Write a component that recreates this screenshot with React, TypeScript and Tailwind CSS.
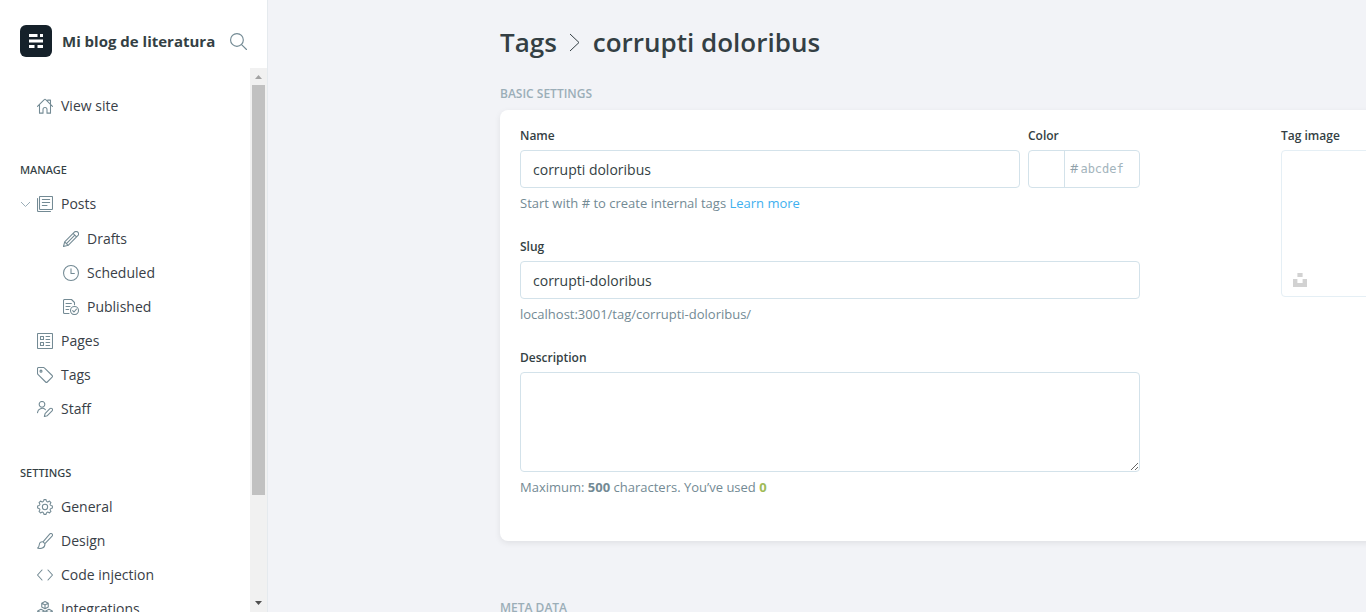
import type { ReactNode } from 'react'

function Icon({ children, className = 'size-4' }: { children: ReactNode; className?: string }) {
  return (
    <svg
      viewBox="0 0 24 24"
      fill="none"
      stroke="currentColor"
      strokeWidth="1.6"
      strokeLinecap="round"
      strokeLinejoin="round"
      aria-hidden="true"
      className={`shrink-0 ${className}`}
    >
      {children}
    </svg>
  )
}

// Outline of a cog: eight flat teeth joined by curved valleys.
function gearPath() {
  const point = (radius: number, degrees: number) => {
    const angle = ((degrees - 90) * Math.PI) / 180
    return `${(12 + radius * Math.cos(angle)).toFixed(2)} ${(12 + radius * Math.sin(angle)).toFixed(2)}`
  }
  let d = `M${point(11.2, -8)}`
  for (let tooth = 0; tooth < 8; tooth++) {
    const a = tooth * 45
    d += `L${point(11.2, a + 8)}L${point(9.4, a + 13)}Q${point(7.6, a + 22.5)} ${point(9.4, a + 32)}L${point(11.2, a + 37)}`
  }
  return `${d}Z`
}

const icons = {
  house: (
    <Icon>
      <path d="M.75 12.6 10.9 2.3a1.500 1.500 0 0 1 2.200 0l10.150 10.300M3.750 10v12.700h5.250v-5.500a3 3 0 0 1 6 0v5.500h5.250V10M16 3.200h4.250v5" />
    </Icon>
  ),
  posts: (
    <Icon>
      <rect x="3.750" y=".75" width="19.500" height="19.500" rx="1" />
      <path d="M20.300 23.250H2.250A1.500 1.500 0 0 1 .75 21.750V3.700M8 5.250h11M8 9.750h11M8 14.250h7" />
    </Icon>
  ),
  pencil: (
    <Icon>
      <path d="M22.200 1.800a3.700 3.700 0 0 0-5.200 0L2.500 16.300.75 23.250l7-1.750L22.200 7a3.700 3.700 0 0 0 0-5.200zM15.100 3.700l5.200 5.200M17.700 6.300 5.200 18.800M2.500 16.300l5.200 5.200" />
    </Icon>
  ),
  clock: (
    <Icon>
      <circle cx="12" cy="12" r="11.200" />
      <path d="M12 5.500V12.750h5" />
    </Icon>
  ),
  published: (
    <Icon>
      <path d="M9 21.750H2.250A1.500 1.500 0 0 1 .75 20.250V2.250A1.500 1.500 0 0 1 2.250.75h10.500L17.250 5.250V8.500M4.500 6.750h8M4.500 11.250h6M4.500 15.750h4" />
      <circle cx="17.250" cy="17.250" r="6" />
      <path d="m14.500 17.500 2 2 3.700-4.300" />
    </Icon>
  ),
  pages: (
    <Icon>
      <rect x=".75" y=".75" width="22.500" height="22.500" rx="1" />
      <path d="M5.250 5.250h4.500v4.500h-4.500zM5.250 14.250h4.500v4.500h-4.500zM13.500 5.250h5.500M13.500 9.750h5.500M13.500 14.250h5.500M13.500 18.750h5.500" />
    </Icon>
  ),
  tag: (
    <Icon>
      <path d="M.75 2.250v7.250a2 2 0 0 0 .6 1.400l11.600 11.600a1.800 1.800 0 0 0 2.500 0l7.250-7.250a1.800 1.800 0 0 0 0-2.500L11 1.350A2 2 0 0 0 9.600.75H2.250A1.500 1.500 0 0 0 .75 2.250z" />
      <circle cx="6" cy="6.200" r="1.500" />
    </Icon>
  ),
  staff: (
    <Icon>
      <circle cx="7.500" cy="5" r="4.250" />
      <path d="M.75 17.500a7 7 0 0 1 11.800-4.600M22.600 11.500a2.300 2.300 0 0 0-3.300 0l-7.200 7.300-1.100 4.500 4.500-1.200 7.100-7.200a2.400 2.400 0 0 0 0-3.400z" />
    </Icon>
  ),
  gear: (
    <Icon>
      <circle cx="12" cy="12" r="4" />
      <path d={gearPath()} />
    </Icon>
  ),
  brush: (
    <Icon>
      <path d="M22.600 1.400a2.300 2.300 0 0 0-3.300 0L9 13.200l2.900 2.900L22.600 4.700a2.300 2.300 0 0 0 0-3.300zM9 13.200c-3.500-.5-5.300 1.400-5.500 4-.2 2.400-1 4.200-2.750 5.400 4.200 1.600 11.300.6 11.150-6.500" />
    </Icon>
  ),
  code: (
    <Icon>
      <path d="M7.500 4.500.75 12l6.750 7.500M16.500 4.500l6.750 7.500-6.750 7.500" />
    </Icon>
  ),
  modules: (
    <Icon>
      <path d="m12 .75 4.900 2.500v5.700L12 11.500 7.100 8.950v-5.700zM7.500 3.500l4.500 2.400 4.500-2.400M12 5.900v5.600M6 12.500l5 2.500v5.700l-5 2.500-5-2.500V15zM1.300 15.200 6 17.500l4.700-2.300M6 17.500v5.500M18 12.500l5 2.500v5.700l-5 2.500-5-2.500V15zM13.300 15.200l4.700 2.300 4.700-2.300M18 17.500v5.500" />
    </Icon>
  ),
}

function NavLink({ icon, children }: { icon: ReactNode; children: ReactNode }) {
  return (
    <a href="#" className="flex h-[34px] items-center gap-2 text-[#738a94]">
      {icon}
      <span className="text-sm text-[#394047]">{children}</span>
    </a>
  )
}

function NavHeading({ children }: { children: ReactNode }) {
  return (
    <h2 className="mt-[30px] flex h-[34px] items-center font-['Noto_Sans',sans-serif] text-[11px] font-medium text-[#343f44]">
      {children}
    </h2>
  )
}

function Sidebar() {
  return (
    <aside className="flex w-[268px] shrink-0 flex-col border-r border-[#e5eaee] bg-white">
      <header className="flex h-[68px] shrink-0 items-center px-5 pt-[14px]">
        <svg viewBox="0 0 32 32" className="size-8 shrink-0" aria-hidden="true">
          <rect width="32" height="32" rx="6" fill="#15212a" />
          <path fill="#fff" d="M9 9h8.500v3H9zM20 9h3v3h-3zM9 14.500h14v3H9zM9 20h5.500v3H9zM17.500 20H23v3h-5.500z" />
        </svg>
        <span className="ml-[10px] flex-1 text-[15px] font-bold whitespace-nowrap text-[#343f44]">
          Mi blog de literatura
        </span>
        <button type="button" aria-label="Search" className="text-[#738a94]">
          <Icon className="size-[17px]">
            <circle cx="9.800" cy="9.800" r="9" />
            <path d="m16.300 16.300 7 7" />
          </Icon>
        </button>
      </header>
      <div className="flex min-h-0 flex-1">
        <nav className="flex-1 overflow-hidden pt-[21px] pl-5">
          <div className="pl-[17px]">
            <NavLink icon={icons.house}>View site</NavLink>
          </div>
          <NavHeading>MANAGE</NavHeading>
          <div className="flex items-center">
            <button type="button" aria-label="Collapse posts" className="w-[17px] text-[#9baeb8]">
              <svg viewBox="0 0 11 10" className="h-[10px] w-[11px]" fill="none" stroke="currentColor" aria-hidden="true">
                <path d="m1 3 4.500 4.500L10 3" />
              </svg>
            </button>
            <NavLink icon={icons.posts}>Posts</NavLink>
          </div>
          <div className="mt-px pl-[43px]">
            <NavLink icon={icons.pencil}>Drafts</NavLink>
            <NavLink icon={icons.clock}>Scheduled</NavLink>
            <NavLink icon={icons.published}>Published</NavLink>
          </div>
          <div className="pl-[17px]">
            <NavLink icon={icons.pages}>Pages</NavLink>
            <NavLink icon={icons.tag}>Tags</NavLink>
            <NavLink icon={icons.staff}>Staff</NavLink>
          </div>
          <NavHeading>SETTINGS</NavHeading>
          <div className="pl-[17px]">
            <NavLink icon={icons.gear}>General</NavLink>
            <NavLink icon={icons.brush}>Design</NavLink>
            <NavLink icon={icons.code}>Code injection</NavLink>
            <NavLink icon={icons.modules}>Integrations</NavLink>
          </div>
        </nav>
        <div className="flex w-[17px] shrink-0 flex-col items-center bg-[#f1f1f1]" aria-hidden="true">
          <svg viewBox="0 0 17 17" className="size-[17px] shrink-0">
            <path d="M5 11h7L8.500 7z" fill="#a3a3a3" />
          </svg>
          <div className="flex min-h-0 w-full flex-1 flex-col px-[2px]">
            <div className="h-[410px] bg-[#c1c1c1]" />
          </div>
          <svg viewBox="0 0 17 17" className="size-[17px] shrink-0">
            <path d="M5 6h7l-3.500 4z" fill="#505050" />
          </svg>
        </div>
      </div>
    </aside>
  )
}

const label = 'mb-1 block text-xs leading-5 font-semibold text-[#343f44]'
const field = 'h-[38px] w-full rounded border border-[#d3e2ea] bg-white px-3 text-sm text-[#343f44] outline-none'
const help = 'mt-[5px] text-[13px] leading-5 text-[#738a94]'

function BasicSettings() {
  return (
    <div className="flex gap-[141px] rounded-lg bg-white px-5 pt-4 pb-[44px] shadow-[0_2px_6px_rgba(0,0,0,0.08)]">
      <form className="flex w-[620px] shrink-0 flex-col gap-6">
        <div className="flex gap-2">
          <div className="flex-1">
            <label htmlFor="name" className={label}>Name</label>
            <input id="name" defaultValue="corrupti doloribus" className={field} />
            <p className={help}>
              Start with # to create internal tags <a href="#" className="text-[#3eb0ef]">Learn more</a>
            </p>
          </div>
          <div className="w-28">
            <label htmlFor="color" className={label}>Color</label>
            <div className="flex h-[38px] items-center rounded border border-[#d3e2ea]">
              <div className="h-full w-9 shrink-0 border-r border-[#d3e2ea]" />
              <span className="pl-[5px] text-[13px] text-[#8fa1aa]">#</span>
              <input
                id="color"
                placeholder="abcdef"
                className="w-full min-w-0 pl-[2px] font-['DejaVu_Sans_Mono',monospace] text-xs outline-none placeholder:text-[#a3b4bc]"
              />
            </div>
          </div>
        </div>
        <div>
          <label htmlFor="slug" className={label}>Slug</label>
          <input id="slug" defaultValue="corrupti-doloribus" className={field} />
          <p className={help}>localhost:3001/tag/corrupti-doloribus/</p>
        </div>
        <div>
          <label htmlFor="description" className={label}>Description</label>
          <textarea
            id="description"
            className="block h-[100px] w-full resize rounded border border-[#d3e2ea] bg-white px-3 py-2 text-sm outline-none"
          />
          <p className={help}>
            Maximum: <b>500</b> characters. You’ve used <b className="text-[#9fbb58]">0</b>
          </p>
        </div>
      </form>
      <div className="flex-1">
        <span className={label}>Tag image</span>
        <div className="flex h-[147px] items-end rounded border border-[#e5eff5] p-[11px] pb-[9px]">
          <button type="button" aria-label="Choose an Unsplash image">
            <svg viewBox="0 0 14 14" className="size-[14px]" fill="#d2d2d2" aria-hidden="true">
              <path d="M4.400 0h5.200v4H4.400zM0 6h4.400v4h5.200V6H14v8H0z" />
            </svg>
          </button>
        </div>
      </div>
    </div>
  )
}

function SectionTitle({ children }: { children: ReactNode }) {
  return <h2 className="text-xs leading-4 font-semibold text-[#9baeb8]">{children}</h2>
}

export default function App() {
  return (
    <div className="flex h-screen overflow-hidden bg-[#f2f3f7] font-['Open_Sans','Noto_Sans',sans-serif] text-[#343f44]">
      <Sidebar />
      <main className="min-w-0 flex-1 overflow-hidden pl-[232px]">
        <div className="min-w-[1040px]">
          <h1 className="flex items-center pt-[22px] text-[26px] leading-10 font-semibold">
            <a href="#">Tags</a>
            <svg viewBox="0 0 12 20" className="mx-3 h-5 w-3" fill="none" stroke="currentColor" aria-hidden="true">
              <path d="m1 2 9 8.500L1 19" />
            </svg>
            corrupti doloribus
          </h1>
          <section className="flex flex-col gap-2 pt-6">
            <SectionTitle>BASIC SETTINGS</SectionTitle>
            <BasicSettings />
          </section>
          <section className="pt-[59px]">
            <SectionTitle>META DATA</SectionTitle>
          </section>
        </div>
      </main>
    </div>
  )
}
